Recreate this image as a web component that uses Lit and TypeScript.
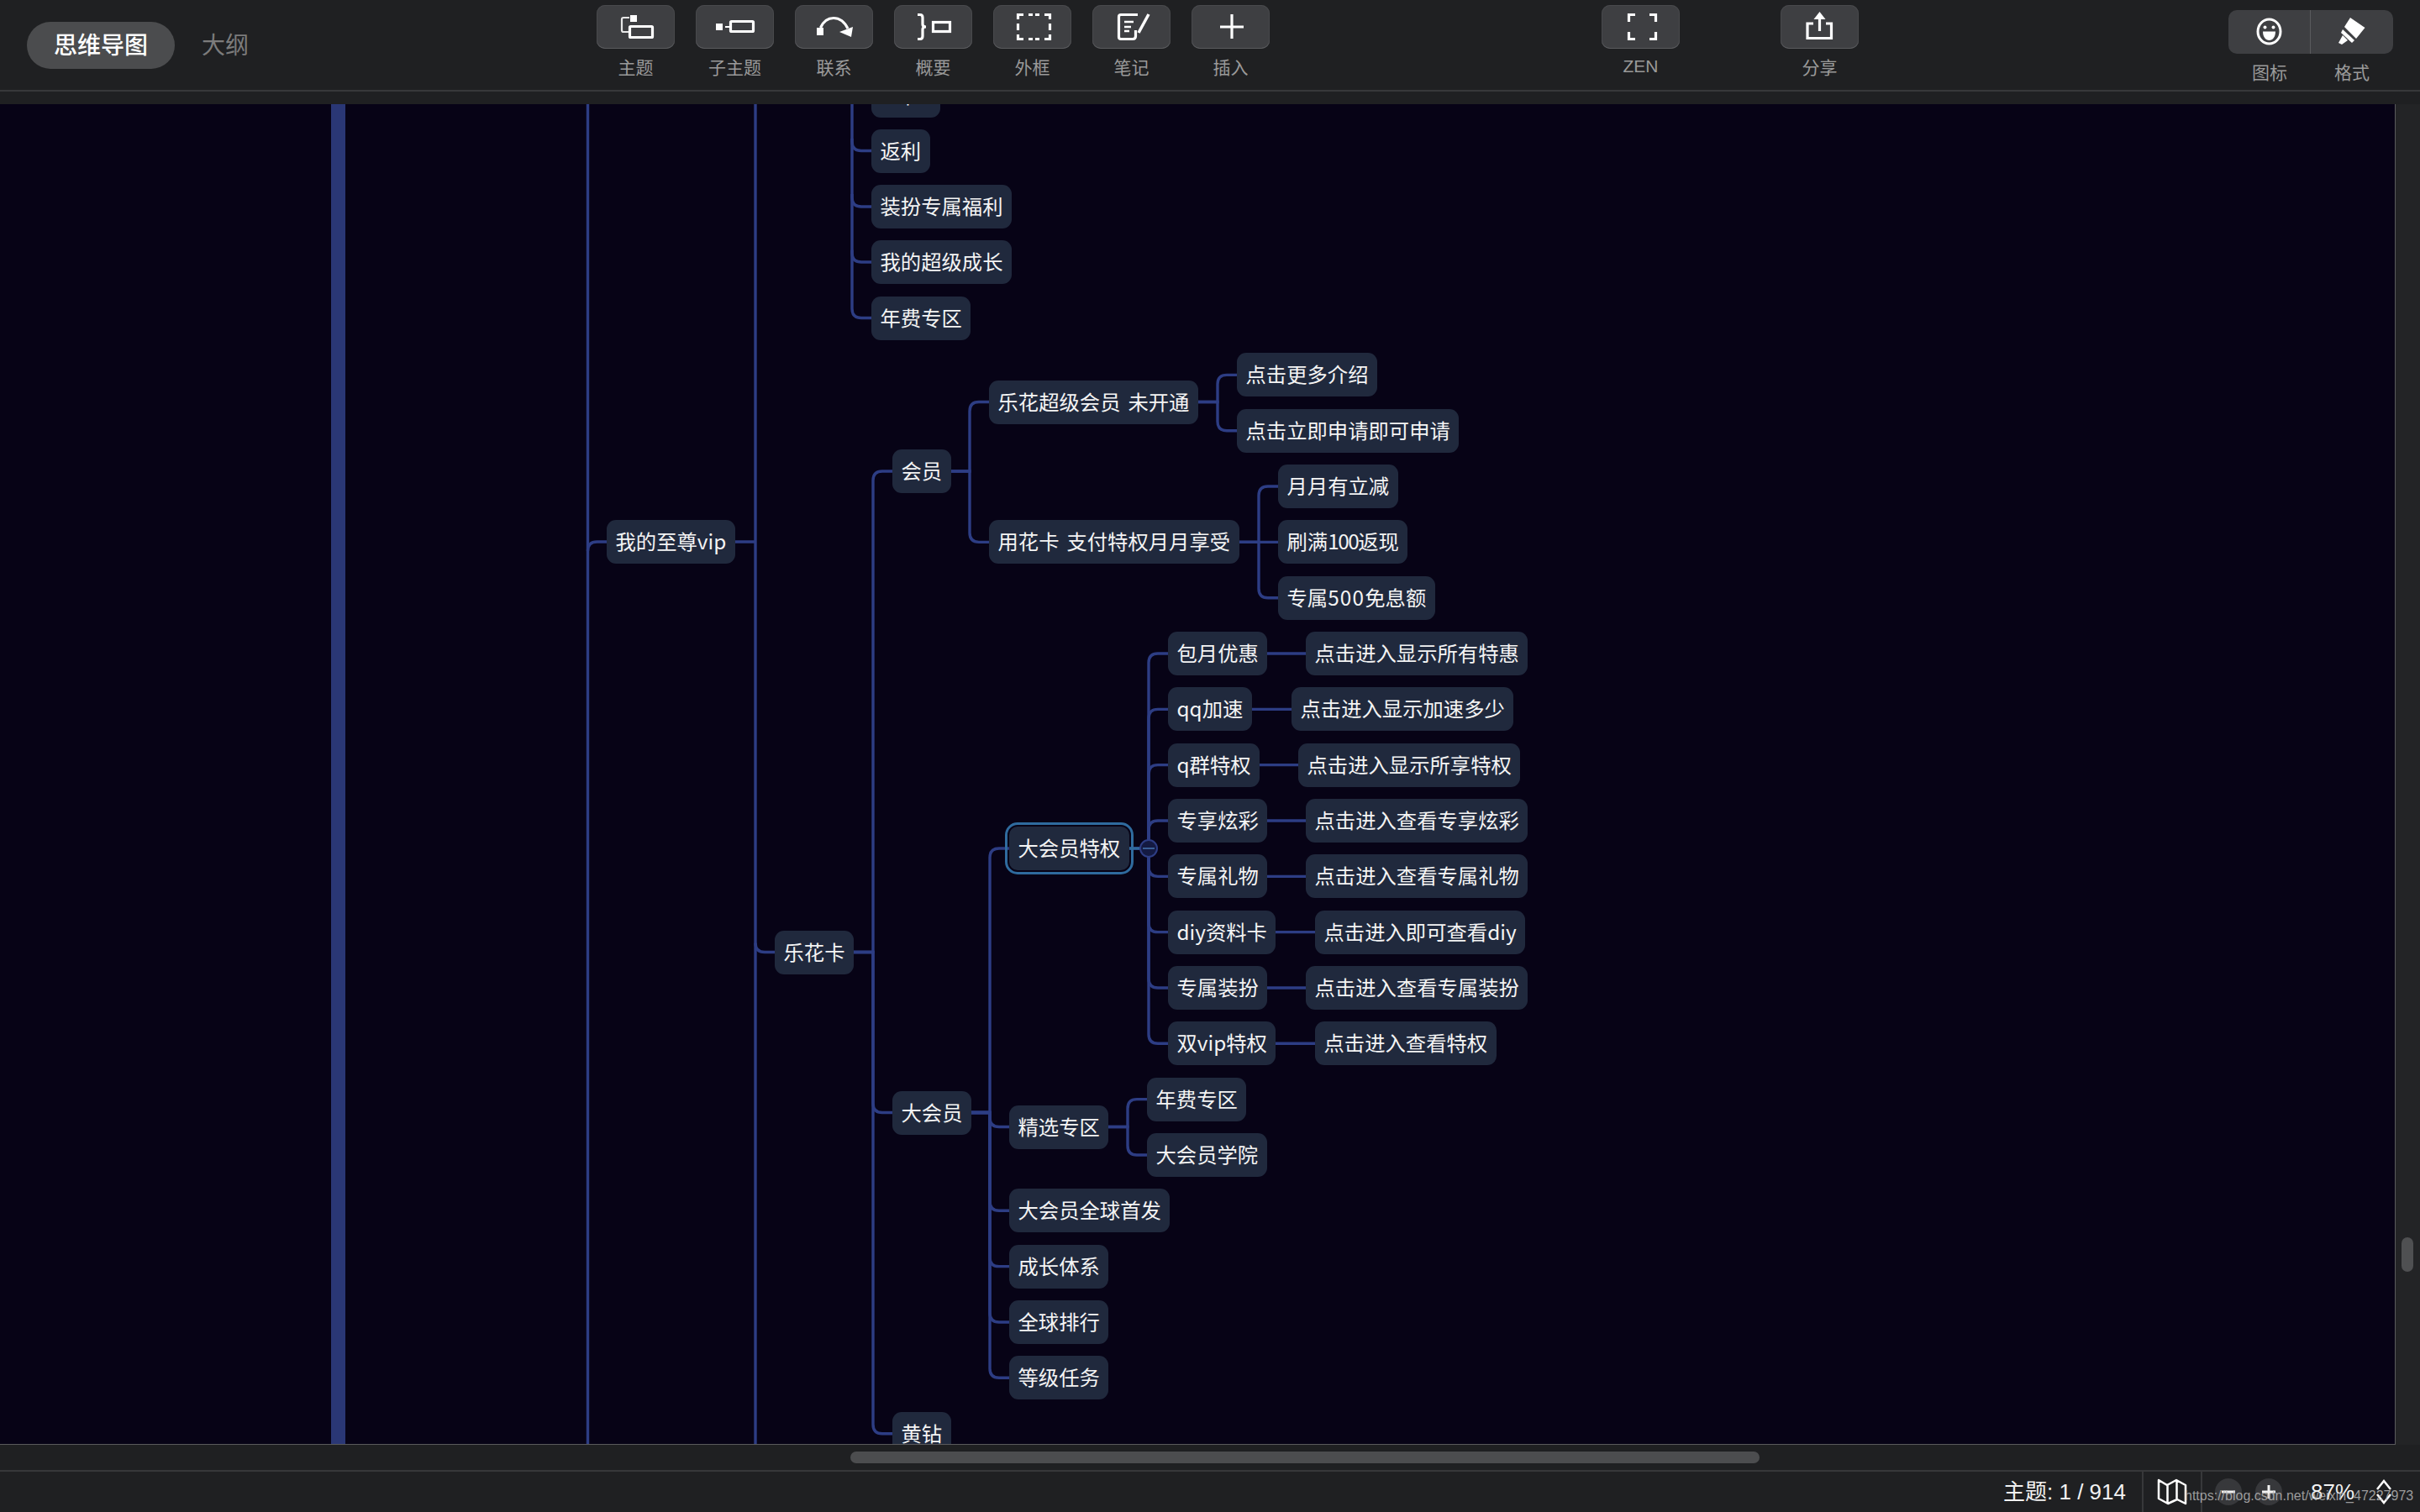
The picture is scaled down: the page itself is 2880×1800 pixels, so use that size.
import { LitElement, html, css, svg } from "lit";
import { customElement } from "lit/decorators.js";

interface N { t: string; x: number; y: number; kids?: N[]; sel?: boolean; stem?: boolean; }

const CANVAS_TOP = 124;
const G = (i: number) => 1640.3 - 66.33 * i; // row centres of the map's leaf grid

const freeNodes: N[] = [
  { t: "卡", x: 1037, y: 114, stem: true },
  { t: "返利", x: 1037, y: 179.5 },
  { t: "装扮专属福利", x: 1037, y: 246 },
  { t: "我的超级成长", x: 1037, y: 312 },
  { t: "年费专区", x: 1037, y: 378.5 },
];

const tree: N = { t: "我的至尊vip", x: 722, y: 645, kids: [] };

const lehua: N = {
  t: "乐花卡", x: 922, y: 1133.5, kids: [
    { t: "会员", x: 1062, y: 561, kids: [
      { t: "乐花超级会员 未开通", x: 1177, y: 478.5, kids: [
        { t: "点击更多介绍", x: 1472, y: G(18) },
        { t: "点击立即申请即可申请", x: 1472, y: G(17) },
      ]},
      { t: "用花卡 支付特权月月享受", x: 1177, y: G(15), kids: [
        { t: "月月有立减", x: 1521, y: G(16) },
        { t: "刷满100返现", x: 1521, y: G(15) },
        { t: "专属500免息额", x: 1521, y: G(14) },
      ]},
    ]},
    { t: "大会员", x: 1062, y: 1324.5, kids: [
      { t: "大会员特权", x: 1201, y: 1010, sel: true, kids: [
        { t: "包月优惠", x: 1390, y: G(13), kids: [{ t: "点击进入显示所有特惠", x: 1554, y: G(13) }] },
        { t: "qq加速", x: 1390, y: G(12), kids: [{ t: "点击进入显示加速多少", x: 1537, y: G(12) }] },
        { t: "q群特权", x: 1390, y: G(11), kids: [{ t: "点击进入显示所享特权", x: 1545, y: G(11) }] },
        { t: "专享炫彩", x: 1390, y: G(10), kids: [{ t: "点击进入查看专享炫彩", x: 1554, y: G(10) }] },
        { t: "专属礼物", x: 1390, y: G(9), kids: [{ t: "点击进入查看专属礼物", x: 1554, y: G(9) }] },
        { t: "diy资料卡", x: 1390, y: G(8), kids: [{ t: "点击进入即可查看diy", x: 1565, y: G(8) }] },
        { t: "专属装扮", x: 1390, y: G(7), kids: [{ t: "点击进入查看专属装扮", x: 1554, y: G(7) }] },
        { t: "双vip特权", x: 1390, y: G(6), kids: [{ t: "点击进入查看特权", x: 1565, y: G(6) }] },
      ]},
      { t: "精选专区", x: 1201, y: 1341.5, kids: [
        { t: "年费专区", x: 1365, y: G(5) },
        { t: "大会员学院", x: 1365, y: G(4) },
      ]},
      { t: "大会员全球首发", x: 1201, y: G(3) },
      { t: "成长体系", x: 1201, y: G(2) },
      { t: "全球排行", x: 1201, y: G(1) },
      { t: "等级任务", x: 1201, y: G(0) },
    ]},
    { t: "黄钻", x: 1062, y: 1706.7 },
  ],
};

const rootNodes: N[] = [tree, lehua, ...freeNodes];

// The reference's digits have uneven widths; these number runs are tracked to fit.
const digitTracking: Record<string, number> = { "100": -1.5, "500": 1.2 };

function nodeText(t: string) {
  return t.split(/(100|500)/).map((p) =>
    digitTracking[p] !== undefined
      ? html`<span style="letter-spacing:${digitTracking[p]}px">${p}</span>`
      : p
  );
}

function flatten(n: N, out: N[] = []): N[] {
  out.push(n);
  (n.kids || []).forEach((k) => flatten(k, out));
  return out;
}

const R = 11;
function elbow(fromX: number, vx: number, py: number, k: N): string {
  if (Math.abs(k.y - py) < 1) return `M${fromX} ${py}H${k.x + 4}`;
  const dir = k.y > py ? 1 : -1;
  return `M${fromX} ${py}H${vx}V${k.y - dir * R}Q${vx} ${k.y} ${vx + R} ${k.y}H${k.x + 4}`;
}
function links(n: N, out: string[] = []): string[] {
  const kids = n.kids || [];
  for (const k of kids) {
    out.push(elbow(n.x + 10, k.x - 23, n.y, k));
    links(k, out);
  }
  return out;
}

const i = {
  topic: svg`<rect x="40" y="12" width="8" height="8" fill="#fff"/><rect x="39.5" y="25.5" width="27" height="13" rx="1" fill="none" stroke="#fff" stroke-width="3.2"/><path d="M39 15H32Q30 15 30 17V30Q30 32 32 32H38" fill="none" stroke="#e8e8e8" stroke-width="2.2"/>`,
  sub: svg`<rect x="24" y="22" width="8" height="8" fill="#fff"/><path d="M35 26H41" stroke="#fff" stroke-width="2"/><rect x="41.5" y="19.5" width="27" height="12" rx="1" fill="none" stroke="#fff" stroke-width="3.2"/>`,
  rel: svg`<rect x="26" y="27" width="8" height="9" fill="#fff"/><path d="M30.5 27C34 19 40 15.5 46 15.5C53 15.5 59 20 63 28" fill="none" stroke="#fff" stroke-width="3.2"/><path d="M53 32L69 26L67 38Z" fill="#fff"/>`,
  sum: svg`<path d="M28 11.5H31Q34 11.5 34 15V23Q34 26 38 26Q34 26 34 29V37Q34 40.5 31 40.5H28" fill="none" stroke="#fff" stroke-width="3.2"/><rect x="46.5" y="20.5" width="20" height="11" fill="none" stroke="#fff" stroke-width="3.2"/>`,
  frame: svg`<path d="M29.500 17V11.500H36M42 11.500H47M50 11.500H55M61 11.500H67.500V17M67.500 22V30M67.500 35V40.500H61M55 40.500H50M47 40.500H42M36 40.500H29.500V35M29.500 30V22" fill="none" stroke="#fff" stroke-width="3.2"/>`,
  note: svg`<path d="M54 11.500H34Q31.500 11.500 31.500 14V38Q31.500 40.500 34 40.500H48Q51.500 40.500 51.500 37V30" fill="none" stroke="#fff" stroke-width="3.2"/><path d="M38 20H49M38 26H46M38 31H44" stroke="#fff" stroke-width="2.500"/><path d="M67 11L55 33" stroke="#fff" stroke-width="3.500"/>`,
  plus: svg`<path d="M48 11V40M34 26H62" stroke="#fff" stroke-width="3.2"/>`,
  zen: svg`<path d="M40 11.500H32.500V20M57 11.500H64.500V20M40 40.500H32.500V32M57 40.500H64.500V32" fill="none" stroke="#fff" stroke-width="3.2"/>`,
  share: svg`<path d="M39 22H32V39.500H60.500V22H54" fill="none" stroke="#fff" stroke-width="3.2"/><path d="M46.500 11V31" stroke="#fff" stroke-width="3.2"/><path d="M46.500 8L53.500 17H39.500Z" fill="#fff"/>`,
};

const tools1 = [
  { l: "主题", s: i.topic }, { l: "子主题", s: i.sub }, { l: "联系", s: i.rel },
  { l: "概要", s: i.sum }, { l: "外框", s: i.frame }, { l: "笔记", s: i.note }, { l: "插入", s: i.plus },
];

@customElement("app-root")
export class AppRoot extends LitElement {
  static styles = css`
    :host { display: block; width: 2880px; height: 1800px; overflow: hidden; background: #1f2022;
      font-family: "Noto Sans CJK SC", "Liberation Sans", sans-serif; position: relative; }
    .app { display: flex; flex-direction: column; height: 1800px; }
    .header { height: 107px; display: flex; align-items: flex-start; padding-left: 32px; border-bottom: 2px solid #37383a; flex: none; box-sizing: content-box; }
    .strip { height: 15px; flex: none; }
    .tabs { display: flex; margin-top: 26px; width: 296px; flex: none; }
    .tab { height: 56px; line-height: 53px; padding: 0 32px; font-size: 28px; color: #7c7c7c; border-radius: 28px; white-space: nowrap; }
    .tab.on { background: #4b4c4e; color: #fff; font-weight: 500; }
    .tools { display: flex; gap: 25px; flex: none; }
    .t1 { margin-left: 382px; }
    .t2 { margin-left: 395px; gap: 120px; }
    .tool { width: 93px; display: flex; flex-direction: column; align-items: center; padding-top: 6px; }
    .btn { width: 93px; height: 52px; background: #3e3f42; border-radius: 10px; box-shadow: inset 0 -1px 0 #5a5b5e, inset 0 0 0 1px #48494c; flex: none; }
    .btn svg { display: block; }
    .lbl { margin-top: 9px; font-size: 21px; line-height: 24px; color: #9a9a9a; white-space: nowrap; }
    .lbl.latin { font-family: "Liberation Sans", sans-serif; }
    .fmt { margin-left: 440px; padding-top: 12px; width: 196px; flex: none; }
    .fmt-box { display: flex; height: 52px; background: #3e3f42; border-radius: 10px; overflow: hidden; }
    .fmt-box svg { display: block; }
    .fmt-cell { width: 97px; flex: none; }
    .fmt-cell + .fmt-cell { border-left: 1px solid #5a5b5e; width: 98px; }
    .fmt-lbl { display: flex; margin-top: 9px; }
    .fmt-lbl span { width: 98px; text-align: center; font-size: 21px; line-height: 24px; color: #9a9a9a; }
    .main { display: flex; height: 1596px; flex: none; }
    .canvas { width: 2851px; height: 1596px; flex: none; box-sizing: border-box; position: relative; overflow: hidden;
      background: #070316; border-right: 1px solid #5a5a5c; border-bottom: 1px solid #5a5a5c; }
    .lines { position: absolute; left: 0; top: 0; }
    .node { position: absolute; height: 52px; box-sizing: border-box; padding: 0 10.5px; background: #20293d; border-radius: 11px;
      color: #f4f4f4; font-size: 24.33px; line-height: 49px; white-space: pre; word-spacing: 3.5px; }
    .node.sel { outline: 3px solid #2f6b9e; outline-offset: 2px; border-radius: 10px; }
    .node.stem { width: 82px; text-align: center; padding-left: 14px; padding-right: 8px; }
    .vs { flex: 1; background: #232426; }
    .vs-thumb { width: 14px; height: 41px; margin: 1349px 0 0 7px; border-radius: 7px; background: #4f5052; }
    .hs { height: 30px; flex: none; box-sizing: border-box; padding-top: 8px; }
    .hs-thumb { width: 1082px; height: 14px; margin-left: 1012px; border-radius: 7px; background: #4c4d4f; }
    .status { height: 48px; flex: none; border-top: 2px solid #37383a; display: flex; justify-content: flex-end; box-sizing: content-box; }
    .count { font-family: "Liberation Sans", "Noto Sans CJK SC", sans-serif; font-size: 26px; line-height: 48px; color: #f2f2f2; padding-right: 19px; white-space: pre; }
    .mapcell { width: 68px; border-left: 2px solid #37383a; display: flex; align-items: center; justify-content: center; }
    .zoomcell { width: 261px; border-left: 2px solid #37383a; display: flex; align-items: center; padding-left: 15px; box-sizing: border-box; }
    .circle { width: 32px; height: 32px; border-radius: 50%; background: #37383b; flex: none; margin-right: 16px; }
    .circle svg, .mapcell svg, .chev svg { display: block; }
    .pct { margin-left: 18px; font-family: "Liberation Sans", sans-serif; font-size: 26px; line-height: 48px; color: #f2f2f2; width: 77px; flex: none; white-space: nowrap; }
    .chev { flex: none; }
    .wm { position: absolute; left: 2600px; top: 1769px; font-family: "Liberation Sans", sans-serif; font-size: 16px; line-height: 24px; color: rgba(185,185,185,.82); white-space: nowrap; }
  `;

  render() {
    const nodes = rootNodes.flatMap((n) => flatten(n));
    const paths = [
      ...links(lehua),
      ...freeNodes.map((n) => `M1014 ${n.y - R - 70}V${n.y - R}Q1014 ${n.y} ${1014 + R} ${n.y}H1041`),
    ];
    return html`
      <div class="app">
        <div class="header">
          <div class="tabs"><div class="tab on">思维导图</div><div class="tab">大纲</div></div>
          <div class="tools t1">
            ${tools1.map((t) => html`<div class="tool"><div class="btn"><svg width="93" height="52" viewBox="0 0 93 52">${t.s}</svg></div><div class="lbl">${t.l}</div></div>`)}
          </div>
          <div class="tools t2">
            <div class="tool"><div class="btn"><svg width="93" height="52" viewBox="0 0 93 52">${i.zen}</svg></div><div class="lbl latin">ZEN</div></div>
            <div class="tool"><div class="btn"><svg width="93" height="52" viewBox="0 0 93 52">${i.share}</svg></div><div class="lbl">分享</div></div>
          </div>
          <div class="fmt">
            <div class="fmt-box">
              <div class="fmt-cell"><svg width="97" height="52" viewBox="0 0 97 52">
                <ellipse cx="48.500" cy="25.500" rx="13.500" ry="14.500" fill="none" stroke="#fff" stroke-width="3"/>
                <circle cx="43.500" cy="20.500" r="2" fill="#fff"/><circle cx="53.500" cy="20.500" r="2" fill="#fff"/>
                <path d="M41 25.500H56C56 32 52.500 36 48.500 36C44.500 36 41 32 41 25.500Z" fill="#fff"/>
              </svg></div>
              <div class="fmt-cell"><svg width="97" height="52" viewBox="0 0 97 52">
                <path d="M47 9L64.500 21L54 34L40 20Z" fill="#fff"/>
                <path d="M38 23L52 36L49 39L36 27Z" fill="#fff"/>
                <path d="M38 30L33 39L37 41L44 36Z" fill="#fff"/>
              </svg></div>
            </div>
            <div class="fmt-lbl"><span>图标</span><span>格式</span></div>
          </div>
        </div>
        <div class="strip"></div>
        <div class="main">
          <div class="canvas">
            <svg class="lines" width="2850" height="1596" viewBox="0 ${CANVAS_TOP} 2850 1596">
              <rect x="394" y="124" width="17" height="1596" fill="#2a3775"/>
              <g fill="none" stroke="#2d3d84" stroke-width="3.4">
                <path d="M699.500 124V1720"/>
                <path d="M899 124V1720"/>
                <path d="M699.500 ${645 + R}Q699.500 645 ${699.500 + R} 645H726"/>
                <path d="M860 645H899"/>
                <path d="M899 ${1133.5 - R}Q899 1133.5 ${899 + R} 1133.5H926"/>
                ${paths.map((d) => svg`<path d=${d}/>`)}
              </g>
              <path d="M1340 1010H1367" stroke="#2f6b9e" stroke-width="3"/>
              <circle cx="1367" cy="1010" r="10" fill="#141a42" stroke="#2d3d84" stroke-width="2"/>
              <path d="M1360 1010H1374" stroke="#3a5f96" stroke-width="2"/>
            </svg>
            ${nodes.map((n) => html`<div class="node ${n.sel ? "sel" : ""} ${n.stem ? "stem" : ""}" style="left:${n.x}px;top:${n.y - 26 - CANVAS_TOP}px">${nodeText(n.t)}</div>`)}
          </div>
          <div class="vs"><div class="vs-thumb"></div></div>
        </div>
        <div class="hs"><div class="hs-thumb"></div></div>
        <div class="status">
          <div class="count">主题: 1 / 914</div>
          <div class="mapcell"><svg width="36" height="32" viewBox="0 0 36 32"><path d="M2 2L12 8L23 2L34 8V30L24 25L13 30L2 24ZM12.500 8V30M23.500 2V25" fill="none" stroke="#fff" stroke-width="2.500" stroke-linejoin="round"/></svg></div>
          <div class="zoomcell">
            <div class="circle"><svg width="32" height="32" viewBox="0 0 32 32"><path d="M8 16H24" stroke="#f2f2f2" stroke-width="3"/></svg></div>
            <div class="circle"><svg width="32" height="32" viewBox="0 0 32 32"><path d="M8 16H24M16 8V24" stroke="#f2f2f2" stroke-width="3"/></svg></div>
            <div class="pct">87%</div>
            <div class="chev"><svg width="20" height="30" viewBox="0 0 20 30"><path d="M2 12L10 2L18 12M2 18L10 28L18 18" fill="none" stroke="#fff" stroke-width="2.500"/></svg></div>
          </div>
        </div>
      </div>
      <div class="wm">https://blog.csdn.net/weixin_47227973</div>
    `;
  }
}
